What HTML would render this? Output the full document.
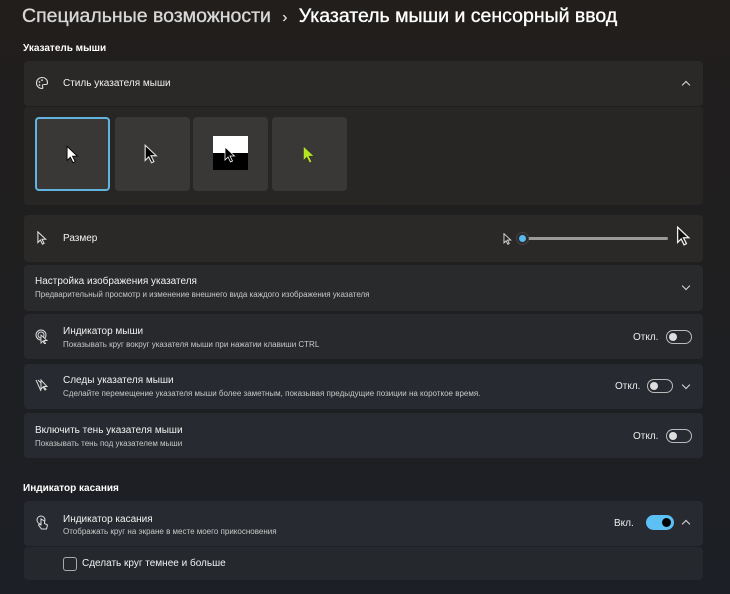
<!DOCTYPE html>
<html><head><meta charset="utf-8"><style>
*{box-sizing:border-box;margin:0;padding:0}
body{width:730px;height:594px;overflow:hidden;font-family:"Liberation Sans","Noto Sans CJK SC",sans-serif;color:#fff;background:linear-gradient(180deg,#211e1c 0%,#1f1f21 50%,#1c1f25 100%);position:relative}
.abs{position:absolute}
.card{position:absolute;left:24px;width:679px;border-radius:4px}
.top{background:#2b2927}
.mid{background:#292a2c}
.bot{background:#272a30}
.t{font-size:11px;color:#f2f2f2}
.s{font-size:9px;color:#c8c8c8}
.tog{position:absolute;width:26px;height:14px;border:1px solid #bbb;border-radius:8px}
.tog::after{content:"";position:absolute;left:2px;top:2px;width:8px;height:8px;border-radius:50%;background:#ddd}
.lbl{position:absolute;font-size:10px;color:#eee}
.chev{position:absolute;width:6px;height:6px;border-right:1.3px solid #ddd;border-bottom:1.3px solid #ddd}
.tile{position:absolute;top:117px;width:75px;height:74px;background:#3a3836;border-radius:4px}
</style></head><body>
<div class="abs" style="left:22px;top:5px;font-size:19.5px;color:#d8d8d8;white-space:nowrap;-webkit-text-stroke:0.35px #d8d8d8">Специальные возможности <span style="font-size:15px;margin:0 6px">›</span> <span style="color:#fff;-webkit-text-stroke:0.35px #fff">Указатель мыши и сенсорный ввод</span></div>
<div class="abs" style="left:23px;top:43px;font-size:10px;font-weight:bold">Указатель мыши</div>

<div class="card top" style="top:61px;height:45px"></div>
<svg class="abs" style="left:35px;top:76px" width="14" height="14" viewBox="0 0 14 14"><path d="M7 1.5a5.5 5.5 0 1 0 0 11c1 0 1-1 .5-2s0-2 1.5-2h2c1 0 1.5-1 1.5-2C12.5 3.5 10 1.5 7 1.5z" fill="none" stroke="#ddd" stroke-width="1.1"/><circle cx="4.5" cy="6" r=".9" fill="#ddd"/><circle cx="7" cy="4.2" r=".9" fill="#ddd"/><circle cx="4.5" cy="9" r=".9" fill="#ddd"/></svg>
<div class="abs t" style="left:63px;top:78px;font-size:10px">Стиль указателя мыши</div>
<div class="chev" style="left:683px;top:82px;transform:rotate(-135deg)"></div>
<div class="card top" style="top:107px;height:98px;background:#282624"></div>
<div class="tile" style="left:35px;border:2px solid #62b4e0;background:#3a3836"></div>
<div class="tile" style="left:115px"></div>
<div class="tile" style="left:193px"></div>
<div class="tile" style="left:272px"></div>
<svg class="abs" style="left:66px;top:145px" width="13" height="19" viewBox="0 0 12 17"><path d="M1 1v13l3-3 2.5 5 2-1-2.5-5h4.5z" fill="#fff" stroke="#000" stroke-width=".8"/></svg>
<svg class="abs" style="left:144px;top:144px" width="14" height="20" viewBox="0 0 12 17"><path d="M1 1v13l3-3 2.5 5 2-1-2.5-5h4.5z" fill="#000" stroke="#ddd" stroke-width="1"/></svg>
<div class="abs" style="left:213px;top:136px;width:35px;height:17px;background:#fff"></div>
<div class="abs" style="left:213px;top:153px;width:35px;height:17px;background:#000"></div>
<svg class="abs" style="left:224px;top:146px" width="12" height="17" viewBox="0 0 12 17"><path d="M1 1v13l3-3 2.5 5 2-1-2.5-5h4.5z" fill="#000" stroke="#fff" stroke-width=".8"/></svg>
<svg class="abs" style="left:302px;top:145px" width="14" height="19" viewBox="0 0 12 17"><path d="M1 1v13l3-3 2.5 5 2-1-2.5-5h4.5z" fill="#b4e61e" stroke="#333" stroke-width=".6"/></svg>

<div class="card top" style="top:215px;height:47px"></div>
<svg class="abs" style="left:37px;top:231px" width="10" height="14" viewBox="0 0 12 17"><path d="M1 1v13l3-3 2.5 5 2-1-2.5-5h4.5z" fill="none" stroke="#ddd" stroke-width="1.3"/></svg>
<div class="abs t" style="left:63px;top:233px;font-size:10px">Размер</div>
<svg class="abs" style="left:503px;top:233px" width="9" height="12" viewBox="0 0 12 17"><path d="M1 1v13l3-3 2.5 5 2-1-2.5-5h4.5z" fill="#222" stroke="#ddd" stroke-width="1.3"/></svg>
<div class="abs" style="left:522px;top:237px;width:146px;height:3px;background:#9a9a9a;border-radius:2px"></div>
<div class="abs" style="left:516px;top:232px;width:13px;height:13px;border-radius:50%;background:#2a2a2a;padding:2px;border:1px solid #444"><div style="width:7px;height:7px;border-radius:50%;background:#5ab8f0"></div></div>
<svg class="abs" style="left:676px;top:226px" width="15" height="20" viewBox="0 0 12 17"><path d="M1 1v13l3-3 2.5 5 2-1-2.5-5h4.5z" fill="#111" stroke="#eee" stroke-width="1.1"/></svg>

<div class="card mid" style="top:265px;height:46px"></div>
<div class="abs t" style="left:35px;top:276px;font-size:10px">Настройка изображения указателя</div>
<div class="abs s" style="left:35px;top:290px;font-size:8px">Предварительный просмотр и изменение внешнего вида каждого изображения указателя</div>
<div class="chev" style="left:683px;top:283px;transform:rotate(45deg)"></div>

<div class="card mid" style="top:314px;height:45px;background:#28292d"></div>
<svg class="abs" style="left:35px;top:329px" width="14" height="15" viewBox="0 0 14 15"><circle cx="6" cy="6" r="5" fill="none" stroke="#ddd" stroke-width="1"/><circle cx="6" cy="6" r="3" fill="none" stroke="#ddd" stroke-width="1"/><path d="M6 6v8l2-2 1.5 3 1-.5-1.5-3h3z" fill="#222" stroke="#ddd" stroke-width=".9"/></svg>
<div class="abs t" style="left:63px;top:326px;font-size:10px">Индикатор мыши</div>
<div class="abs s" style="left:63px;top:340px;font-size:8px">Показывать круг вокруг указателя мыши при нажатии клавиши CTRL</div>
<div class="lbl" style="left:633px;top:332px">Откл.</div>
<div class="tog" style="left:666px;top:330px"></div>

<div class="card bot" style="top:364px;height:45px"></div>
<svg class="abs" style="left:35px;top:379px" width="15" height="13" viewBox="0 0 15 13"><path d="M1 1l5 11M3 1l3 3M6 1v9l2-2 2 3 1-.5-2-3h3z" fill="none" stroke="#ddd" stroke-width="1"/></svg>
<div class="abs t" style="left:63px;top:375px;font-size:10px">Следы указателя мыши</div>
<div class="abs s" style="left:63px;top:389px;font-size:8px">Сделайте перемещение указателя мыши более заметным, показывая предыдущие позиции на короткое время.</div>
<div class="lbl" style="left:615px;top:381px">Откл.</div>
<div class="tog" style="left:647px;top:379px"></div>
<div class="chev" style="left:683px;top:382px;transform:rotate(45deg)"></div>

<div class="card bot" style="top:413px;height:45px"></div>
<div class="abs t" style="left:35px;top:425px;font-size:10px">Включить тень указателя мыши</div>
<div class="abs s" style="left:35px;top:439px;font-size:8px">Показывать тень под указателем мыши</div>
<div class="lbl" style="left:633px;top:431px">Откл.</div>
<div class="tog" style="left:666px;top:429px"></div>

<div class="abs" style="left:23px;top:483px;font-size:10px;font-weight:bold">Индикатор касания</div>
<div class="card bot" style="top:501px;height:45px"></div>
<svg class="abs" style="left:36px;top:515px" width="13" height="15" viewBox="0 0 13 15"><circle cx="5" cy="5" r="4" fill="none" stroke="#ddd" stroke-width="1"/><path d="M5 4v6l-1.5-1-1 1 3 4h5l1-4-3-1.5V6z" fill="#262a30" stroke="#ddd" stroke-width="1"/></svg>
<div class="abs t" style="left:63px;top:514px;font-size:10px">Индикатор касания</div>
<div class="abs s" style="left:63px;top:527px;font-size:8px">Отображать круг на экране в месте моего прикосновения</div>
<div class="lbl" style="left:614px;top:518px">Вкл.</div>
<div class="abs" style="left:646px;top:515px;width:28px;height:15px;border-radius:8px;background:#5cc0f5"><div style="position:absolute;right:3px;top:3px;width:9px;height:9px;border-radius:50%;background:#000"></div></div>
<div class="chev" style="left:683px;top:521px;transform:rotate(-135deg)"></div>
<div class="card bot" style="top:547px;height:33px;background:#25282d"></div>
<div class="abs" style="left:63px;top:557px;width:14px;height:14px;border:1px solid #aaa;border-radius:3px"></div>
<div class="abs t" style="left:82px;top:558px;font-size:10px">Сделать круг темнее и больше</div>
</body></html>
